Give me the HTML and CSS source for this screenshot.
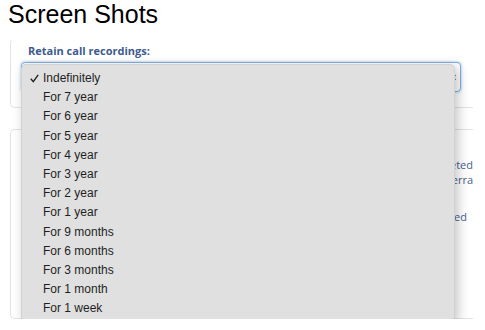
FILE: index.html
```html
<!DOCTYPE html>
<html lang="en">
<head>
    <meta charset="UTF-8">
    <meta name="viewport" content="width=device-width, initial-scale=1.0">
    <title>Screen Shots</title>
    <link rel="stylesheet" href="styles.css">
</head>
<body>

    <h1 class="title">Screen Shots</h1>

    <div class="page">
        <div class="card card-top">
            <label class="field-label" for="retain">Retain call recordings:</label>
            <div class="select-wrap">
                <div class="select-box" id="retain">
                    <svg class="chevrons" width="8" height="13" viewBox="0 0 8 13">
                        <path d="M1.5 5 L4 2.5 L6.5 5 M1.5 8 L4 10.5 L6.5 8" fill="none" stroke="#555" stroke-width="1.2"/>
                    </svg>
                </div>

                <ul class="menu">
                    <li class="selected">
                        <svg class="check" width="9" height="9" viewBox="0 0 9 9">
                            <path d="M0.8 4.8 L3.3 7.6 L8.2 0.9" fill="none" stroke="#222" stroke-width="1.4"/>
                        </svg>Indefinitely
                    </li>
                    <li>For 7 year</li>
                    <li>For 6 year</li>
                    <li>For 5 year</li>
                    <li>For 4 year</li>
                    <li>For 3 year</li>
                    <li>For 2 year</li>
                    <li>For 1 year</li>
                    <li>For 9 months</li>
                    <li>For 6 months</li>
                    <li>For 3 months</li>
                    <li>For 1 month</li>
                    <li>For 1 week</li>
                </ul>
            </div>
        </div>

        <div class="card card-bottom">
            <p class="help">Recordings that are not deleted<br>will be kept on the server in Sierra</p>
            <p class="help help-last">and can be downloaded or removed</p>
        </div>
    </div>

</body>
</html>
```

FILE: styles.css
```css
body {
    margin: 0;
    padding: 0;
    background: #fff;
    font-family: "Liberation Sans", Arial, sans-serif;
}

.title {
    margin: 0 0 0 8px;
    font-size: 25px;
    font-weight: normal;
    line-height: 29px;
    color: #000;
}

.page {
    padding: 9px 12px 0 10px;
}

/* cards behind the open dropdown */
.card {
    width: 463px;
    box-sizing: border-box;
    border: 1px solid #e3e3e3;
    border-right: none;
    border-radius: 5px 0 0 5px;
    background: #fff;
}

.card-top {
    height: 70px;
    padding: 4px 0 0 10px;
    border-top-color: #fff;
}

.card-bottom {
    height: 190px;
    margin-top: 21px;
    padding-top: 27px;
}

.field-label {
    display: block;
    padding-left: 7px;
    font-family: "Open Sans", sans-serif;
    font-size: 11px;
    font-weight: bold;
    line-height: 15px;
    color: #3d5a8c;
}

.select-wrap {
    position: relative;
    margin-top: 4px;
}

.select-box {
    width: 440px;
    height: 30px;
    box-sizing: border-box;
    border: 1px solid #7fb0e0;
    border-radius: 4px;
    box-shadow: 0 0 3px rgba(90, 150, 215, 0.6);
    background: #fff;
}

.chevrons {
    float: right;
    margin: 8px 3px 0 0;
}

.menu {
    position: absolute;
    top: 2px;
    left: 0;
    width: 434px;
    height: 257px;
    box-sizing: border-box;
    margin: 0;
    padding: 4px 0 0 0;
    list-style-type: none;
    background: #e0e0e0;
    border: 1px solid #d2d2d2;
    border-radius: 5px;
    box-shadow: 3px 3px 12px rgba(0, 0, 0, 0.24);
}

.menu li {
    height: 19.2px;
    line-height: 19.2px;
    padding-left: 21px;
    font-size: 12px;
    color: #1f1f1f;
}

.menu .check {
    margin: 0 4px 0 -13px;
    vertical-align: -1px;
}

.help {
    margin: 0;
    text-align: right;
    font-family: "Open Sans", sans-serif;
    font-size: 11px;
    line-height: 15px;
    color: #4a5f8c;
}

.help-last {
    margin-top: 22px;
    padding-right: 6px;
}
```
